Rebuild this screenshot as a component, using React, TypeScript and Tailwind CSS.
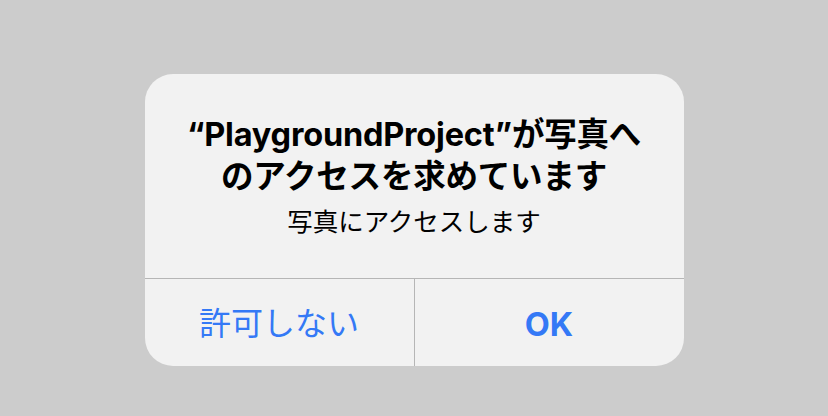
export default function App() {
  return (
    <div className="w-[828px] h-[416px] bg-[#cccccc] flex justify-center pt-[74px] font-['Inter','Noto_Sans_CJK_JP',sans-serif]">
      <div className="w-[539px] h-[292px] bg-[#f2f2f2] rounded-[28px] flex flex-col overflow-hidden">
        <div className="flex-1 flex flex-col items-center pt-[40px] px-4 text-center">
          <h1 className="text-[32.5px] leading-[42px] font-bold text-black tracking-[-0.2px] whitespace-nowrap">
            “PlaygroundProject”が写真へ
            <br />
            のアクセスを求めています
          </h1>
          <p className="mt-[8px] text-[25.5px] leading-[32px] text-black">写真にアクセスします</p>
        </div>
        <div className="h-[88px] flex border-t border-[#b6b6b6]">
          <button className="flex-1 flex items-center justify-center pt-[3px] text-[32px] text-[#3479f6]">
            許可しない
          </button>
          <div className="w-px bg-[#b6b6b6]" />
          <button className="flex-1 flex items-center justify-center pt-[5px] text-[32.5px] font-bold text-[#3479f6]">
            OK
          </button>
        </div>
      </div>
    </div>
  );
}
